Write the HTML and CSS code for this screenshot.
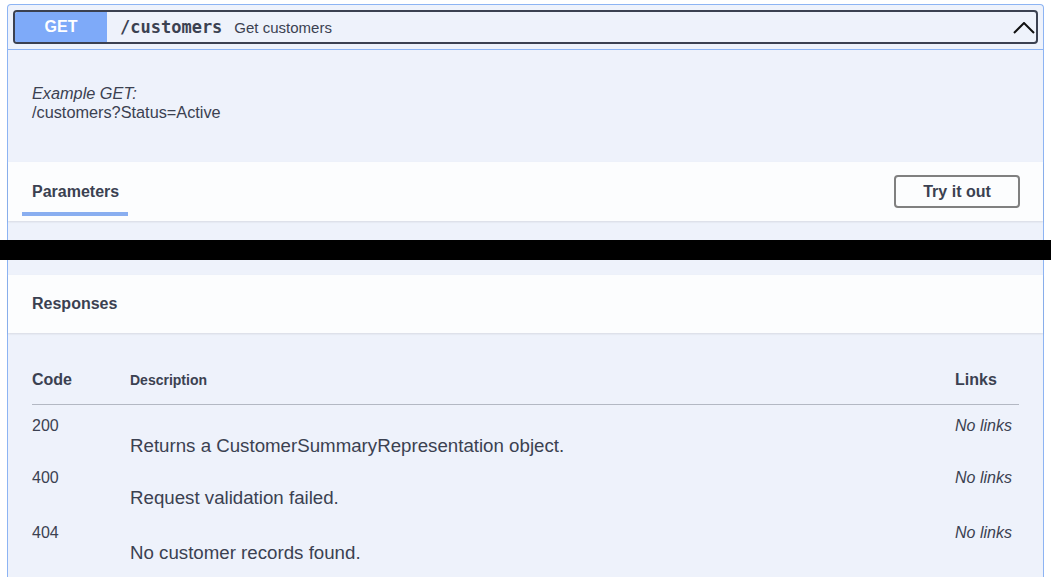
FILE: index.html
```html
<!DOCTYPE html>
<html lang="en">
<head>
<meta charset="utf-8">
<title>GET /customers</title>
<link rel="stylesheet" href="styles.css">
</head>
<body>
<div class="page">
  <div class="opblock">
    <div class="summary">
      <div class="summary-box">
        <span class="method">GET</span>
        <span class="path">/customers</span>
        <span class="summary-desc">Get customers</span>
        <svg class="chevron" width="22" height="12" viewBox="0 0 22 12" aria-hidden="true">
          <path d="M1 11 L11 1 L21 11" fill="none" stroke="#111" stroke-width="2"/>
        </svg>
      </div>
    </div>
    <div class="description">
      <p><em>Example GET:</em><br>/customers?Status=Active</p>
    </div>
    <div class="section-header params-header">
      <div class="tab">Parameters</div>
      <button class="try-btn" type="button">Try it out</button>
    </div>
    <div class="params-body"></div>
    <div class="section-header responses-header">
      <h4 class="section-title">Responses</h4>
    </div>
    <div class="responses">
      <div class="resp-row resp-head">
        <div class="col-code">Code</div>
        <div class="col-desc head-desc">Description</div>
        <div class="col-links">Links</div>
      </div>
      <div class="resp-row">
        <div class="col-code">200</div>
        <div class="col-desc"><p>Returns a CustomerSummaryRepresentation object.</p></div>
        <div class="col-links"><i>No links</i></div>
      </div>
      <div class="resp-row resp-row-tall">
        <div class="col-code">400</div>
        <div class="col-desc"><p>Request validation failed.</p></div>
        <div class="col-links"><i>No links</i></div>
      </div>
      <div class="resp-row">
        <div class="col-code">404</div>
        <div class="col-desc"><p>No customer records found.</p></div>
        <div class="col-links"><i>No links</i></div>
      </div>
    </div>
  </div>
</div>
<div class="redaction"></div>
</body>
</html>
```
FILE: styles.css
```css
html, body {
  margin: 0;
  padding: 0;
  overflow: hidden;
  background: #ffffff;
}

body {
  font-family: "Liberation Sans", Arial, sans-serif;
  color: #3b4151;
  position: relative;
  height: 577px;
}

.page {
  padding: 4px 7px 0 7px;
}

.opblock {
  border: 1px solid #8db4f3;
  border-bottom: none;
  border-radius: 4px 4px 0 0;
  background: #eef2fb;
  min-height: 600px;
}

.summary {
  padding: 5px;
  border-bottom: 1px solid #8db4f3;
}

.summary-box {
  display: flex;
  align-items: center;
  height: 30px;
  border: 2px solid #3b4151;
  border-radius: 4px;
  overflow: hidden;
}

.method {
  width: 92px;
  height: 31px;
  flex: 0 0 auto;
  display: flex;
  align-items: center;
  justify-content: center;
  background: #7eaaf9;
  color: #ffffff;
  font-weight: bold;
  font-size: 16px;
  border-radius: 2px 0 0 2px;
}

.path {
  margin-left: 13px;
  font-family: "DejaVu Sans Mono", "Liberation Mono", monospace;
  font-weight: bold;
  font-size: 17px;
  color: #3b4151;
}

.summary-desc {
  margin-left: 12px;
  font-size: 15px;
  color: #3b4151;
}

.chevron {
  margin-left: auto;
  margin-right: 1px;
  margin-top: 1px;
}

.description {
  padding: 34px 24px 40px 24px;
}

.description p {
  margin: 0;
  font-size: 16.3px;
  line-height: 19px;
}

.section-header {
  display: flex;
  background: rgba(255, 255, 255, 0.8);
  box-shadow: 0 1px 2px rgba(0, 0, 0, 0.1);
}

.params-header {
  height: 59px;
  padding: 0 23px 0 14px;
  justify-content: space-between;
}

.tab {
  align-self: flex-end;
  margin-bottom: 5px;
  padding: 0 9px 10px 10px;
  font-size: 16px;
  font-weight: bold;
  line-height: 20px;
  border-bottom: 4px solid #89aef0;
}

.try-btn {
  align-self: center;
  width: 126px;
  height: 33px;
  padding: 0;
  background: transparent;
  border: 2px solid #808080;
  border-radius: 4px;
  font-family: "Liberation Sans", Arial, sans-serif;
  font-size: 16px;
  font-weight: bold;
  color: #3b4151;
}

.params-body {
  height: 54px;
}

.responses-header {
  height: 58px;
  padding: 0 24px;
  align-items: center;
}

.section-title {
  margin: 0;
  font-size: 16px;
  font-weight: bold;
}

.responses {
  padding: 24px 24px 0 24px;
}

.resp-row {
  display: grid;
  grid-template-columns: 98px 1fr 64px;
  padding-top: 11px;
  height: 41px;
}

.resp-row-tall {
  height: 44px;
}

.resp-head {
  height: auto;
  padding: 12px 0 14px 0;
  border-bottom: 1px solid #b3b8c3;
  font-weight: bold;
  align-items: center;
}

.col-code {
  font-size: 16px;
  line-height: 20px;
}

.col-links {
  font-size: 16px;
  line-height: 20px;
}

.head-desc {
  font-size: 14px;
  line-height: 20px;
  padding-top: 1px;
}

.col-desc p {
  margin: 19px 0 0 0;
  font-size: 18.7px;
  line-height: 22px;
}

.redaction {
  position: absolute;
  left: 0;
  top: 240px;
  width: 100%;
  height: 20px;
  background: #000000;
}
```
